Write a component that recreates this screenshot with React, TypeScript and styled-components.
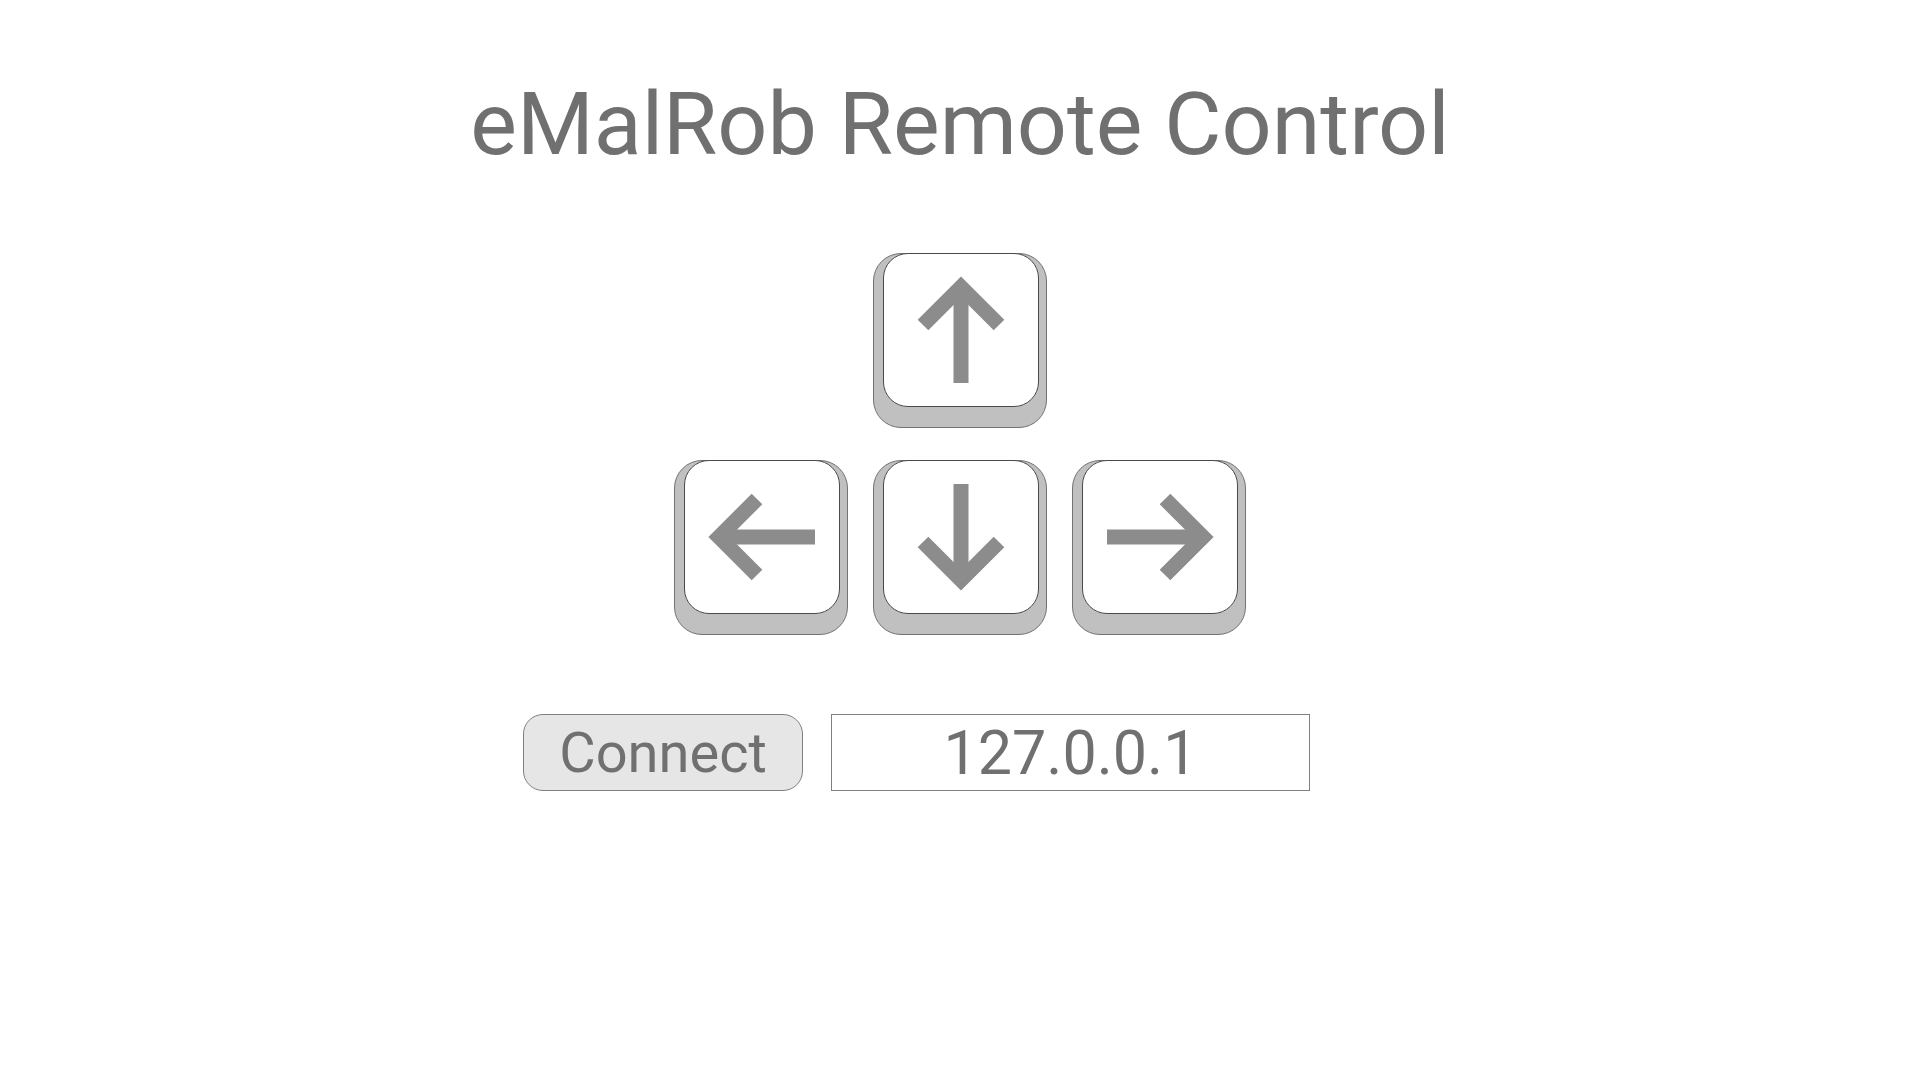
import React from "react"
import styled, { createGlobalStyle } from "styled-components";

const GlobalStyle = createGlobalStyle`
    html, body {
        margin: 0;
        padding: 0;
        background: #ffffff;
        font-family: Roboto, "Liberation Sans", sans-serif;
    }
`

type Direction = "up" | "down" | "left" | "right"

const rotation: Record<Direction, number> = {
    up: 0,
    right: 90,
    down: 180,
    left: 270
}

const Page = styled.div`
    display: flex;
    flex-direction: column;
    align-items: center;
    padding-top: 80px;
`

const Title = styled.h1`
    margin: 0;
    font-family: Roboto, "Liberation Sans", sans-serif;
    font-weight: 400;
    font-size: 88px;
    line-height: 88px;
    color: #707070;
`

const KeyPad = styled.div`
    display: grid;
    grid-template-columns: repeat(3, 174px);
    grid-template-rows: 175px 175px;
    column-gap: 25px;
    row-gap: 32px;
    margin-top: 85px;
`

const Key = styled.button<{ $col: number, $row: number }>`
    grid-column: ${props => props.$col};
    grid-row: ${props => props.$row};
    display: flex;
    box-sizing: border-box;
    width: 174px;
    height: 175px;
    padding: 0 10px 20px 9px;
    margin: 0;
    background: #c0c0c0;
    border: 1px solid #737373;
    border-radius: 28px;
    cursor: pointer;
`

const KeyFace = styled.div`
    flex: 1;
    display: flex;
    align-items: center;
    justify-content: center;
    margin-top: -1px;
    background: #ffffff;
    border: 1px solid #4a4a4a;
    border-radius: 25px;
`

const ConnectRow = styled.div`
    display: flex;
    align-items: center;
    gap: 28px;
    margin-top: 79px;
    padding-right: 87px;
`

const ConnectButton = styled.button`
    box-sizing: border-box;
    width: 280px;
    height: 77px;
    padding: 0;
    background: #e6e6e6;
    border: 1px solid #808080;
    border-radius: 20px;
    font-family: Roboto, "Liberation Sans", sans-serif;
    font-size: 56px;
    color: #707070;
    cursor: pointer;
`

const AddressInput = styled.input`
    box-sizing: border-box;
    width: 479px;
    height: 77px;
    padding: 0;
    border: 1px solid #808080;
    border-radius: 0;
    background: #ffffff;
    text-align: center;
    font-family: Roboto, "Liberation Sans", sans-serif;
    font-size: 61px;
    color: #707070;
    outline: none;
`

const Arrow = ({ dir }: { dir: Direction }) => (
    <svg width="154" height="154" viewBox="0 0 154 154">
        <g transform={`rotate(${rotation[dir]} 77 77)`} stroke="#8c8c8c" strokeWidth="15" fill="none">
            <polyline points="39,72 77,34 115,72" strokeLinejoin="miter" strokeLinecap="butt" />
            <line x1="77" y1="36" x2="77" y2="130" strokeLinecap="butt" />
        </g>
    </svg>
)

const keys: { dir: Direction, col: number, row: number }[] = [
    { dir: "up", col: 2, row: 1 },
    { dir: "left", col: 1, row: 2 },
    { dir: "down", col: 2, row: 2 },
    { dir: "right", col: 3, row: 2 }
]

export default function App() {
    return (
        <>
            <GlobalStyle />
            <Page>
                <Title>eMalRob Remote Control</Title>
                <KeyPad>
                    {keys.map(k => (
                        <Key key={k.dir} $col={k.col} $row={k.row} aria-label={k.dir}>
                            <KeyFace>
                                <Arrow dir={k.dir} />
                            </KeyFace>
                        </Key>
                    ))}
                </KeyPad>
                <ConnectRow>
                    <ConnectButton>Connect</ConnectButton>
                    <AddressInput defaultValue="127.0.0.1" />
                </ConnectRow>
            </Page>
        </>
    )
}
